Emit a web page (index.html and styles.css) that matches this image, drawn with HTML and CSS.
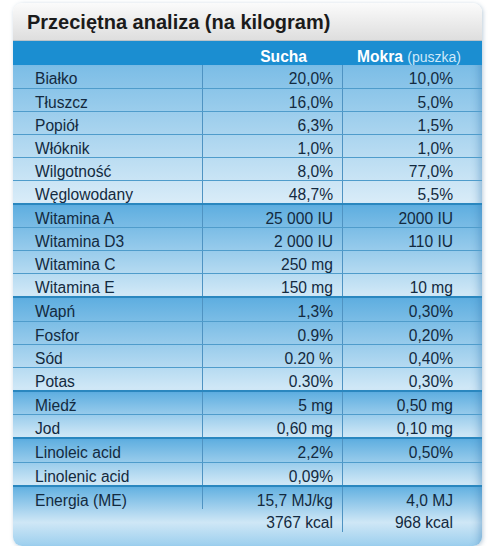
FILE: index.html
```html
<!DOCTYPE html>
<html lang="pl">
<head>
    <meta charset="UTF-8">
    <meta name="viewport" content="width=device-width, initial-scale=1.0">
    <title>Przeciętna analiza</title>
    <link rel="stylesheet" href="styles.css">
</head>
<body>
    <div class="card">
        <h2 class="title">Przeciętna analiza (na kilogram)</h2>

        <div class="row head">
            <span class="cell name"></span>
            <span class="cell dry">Sucha</span>
            <span class="cell wet">Mokra <small>(puszka)</small></span>
        </div>

        <div class="group first">
            <div class="row"><span class="cell name">Białko</span><span class="cell dry">20,0%</span><span class="cell wet">10,0%</span></div>
            <div class="row"><span class="cell name">Tłuszcz</span><span class="cell dry">16,0%</span><span class="cell wet">5,0%</span></div>
            <div class="row"><span class="cell name">Popiół</span><span class="cell dry">6,3%</span><span class="cell wet">1,5%</span></div>
            <div class="row"><span class="cell name">Włóknik</span><span class="cell dry">1,0%</span><span class="cell wet">1,0%</span></div>
            <div class="row"><span class="cell name">Wilgotność</span><span class="cell dry">8,0%</span><span class="cell wet">77,0%</span></div>
            <div class="row"><span class="cell name">Węglowodany</span><span class="cell dry">48,7%</span><span class="cell wet">5,5%</span></div>
        </div>

        <div class="group">
            <div class="row"><span class="cell name">Witamina A</span><span class="cell dry">25 000 IU</span><span class="cell wet">2000 IU</span></div>
            <div class="row"><span class="cell name">Witamina D3</span><span class="cell dry">2 000 IU</span><span class="cell wet">110 IU</span></div>
            <div class="row"><span class="cell name">Witamina C</span><span class="cell dry">250 mg</span><span class="cell wet"></span></div>
            <div class="row"><span class="cell name">Witamina E</span><span class="cell dry">150 mg</span><span class="cell wet">10 mg</span></div>
        </div>

        <div class="group">
            <div class="row"><span class="cell name">Wapń</span><span class="cell dry">1,3%</span><span class="cell wet">0,30%</span></div>
            <div class="row"><span class="cell name">Fosfor</span><span class="cell dry">0.9%</span><span class="cell wet">0,20%</span></div>
            <div class="row"><span class="cell name">Sód</span><span class="cell dry">0.20 %</span><span class="cell wet">0,40%</span></div>
            <div class="row"><span class="cell name">Potas</span><span class="cell dry">0.30%</span><span class="cell wet">0,30%</span></div>
        </div>

        <div class="group">
            <div class="row"><span class="cell name">Miedź</span><span class="cell dry">5 mg</span><span class="cell wet">0,50 mg</span></div>
            <div class="row"><span class="cell name">Jod</span><span class="cell dry">0,60 mg</span><span class="cell wet">0,10 mg</span></div>
        </div>

        <div class="group">
            <div class="row"><span class="cell name">Linoleic acid</span><span class="cell dry">2,2%</span><span class="cell wet">0,50%</span></div>
            <div class="row"><span class="cell name">Linolenic acid</span><span class="cell dry">0,09%</span><span class="cell wet"></span></div>
        </div>

        <div class="group last">
            <div class="row"><span class="cell name">Energia (ME)</span><span class="cell dry">15,7 MJ/kg</span><span class="cell wet">4,0 MJ</span></div>
            <div class="row plain"><span class="cell name"></span><span class="cell dry">3767 kcal</span><span class="cell wet">968 kcal</span></div>
        </div>
    </div>
</body>
</html>
```

FILE: styles.css
```css
body {
    margin: 0;
    background: #ffffff;
    font-family: "Liberation Sans", Arial, sans-serif;
}
.card {
    width: 469px;
    margin: 3px 0 0 13px;
    border-radius: 9px;
    overflow: hidden;
    box-shadow: 1px 1px 4px rgba(60, 110, 150, 0.35);
}
.title {
    margin: 0;
    height: 37px;
    padding-left: 14px;
    line-height: 38px;
    font-size: 20px;
    font-weight: bold;
    color: #1b1b1b;
    background: linear-gradient(#fbfbfb, #dedede);
    border-bottom: 1px solid #b9c3c9;
}
.row {
    display: grid;
    grid-template-columns: 189px 140px 140px;
    height: 23px;
    box-sizing: border-box;
    border-top: 1px solid #4f9ccb;
    font-size: 15.6px;
    color: #132a40;
    line-height: 17px;
}
.row:first-child {
    height: 22.5px;
    border-top: none;
}
.cell {
    white-space: nowrap;
    padding-top: 5px;
}
.name {
    padding-left: 22px;
}
.dry {
    text-align: right;
    padding-right: 9px;
    border-left: 1px solid #4f93c2;
}
.wet {
    text-align: right;
    padding-right: 29px;
    border-left: 1px solid #4f93c2;
}
.row.head {
    height: 24px;
    border-top: none;
    background: #1b8ed1;
    color: #ffffff;
    font-weight: bold;
}
.head .cell {
    padding-top: 7px;
}
.head .dry {
    border-left: none;
    padding-right: 35px;
}
.head .wet {
    border-left: none;
    text-align: left;
    padding-left: 15px;
    padding-right: 0;
}
.head small {
    font-size: 14px;
    font-weight: normal;
    color: #cfe9fa;
}
.group {
    border-top: 2px solid #2a87bf;
    background: linear-gradient(#5eaee0, #d2e9f7);
    box-shadow: inset -10px 0 10px -8px rgba(40, 110, 170, 0.45);
}
.group.first {
    border-top: none;
    background: linear-gradient(#7bbde6, #d9ecf8);
}
.group.last {
    height: 59px;
    background: linear-gradient(#63b1e1, #cfe7f6 60%, #9ccfee);
}
.row.plain {
    border-top: none;
}
.plain .dry {
    border-left: none;
}
```
